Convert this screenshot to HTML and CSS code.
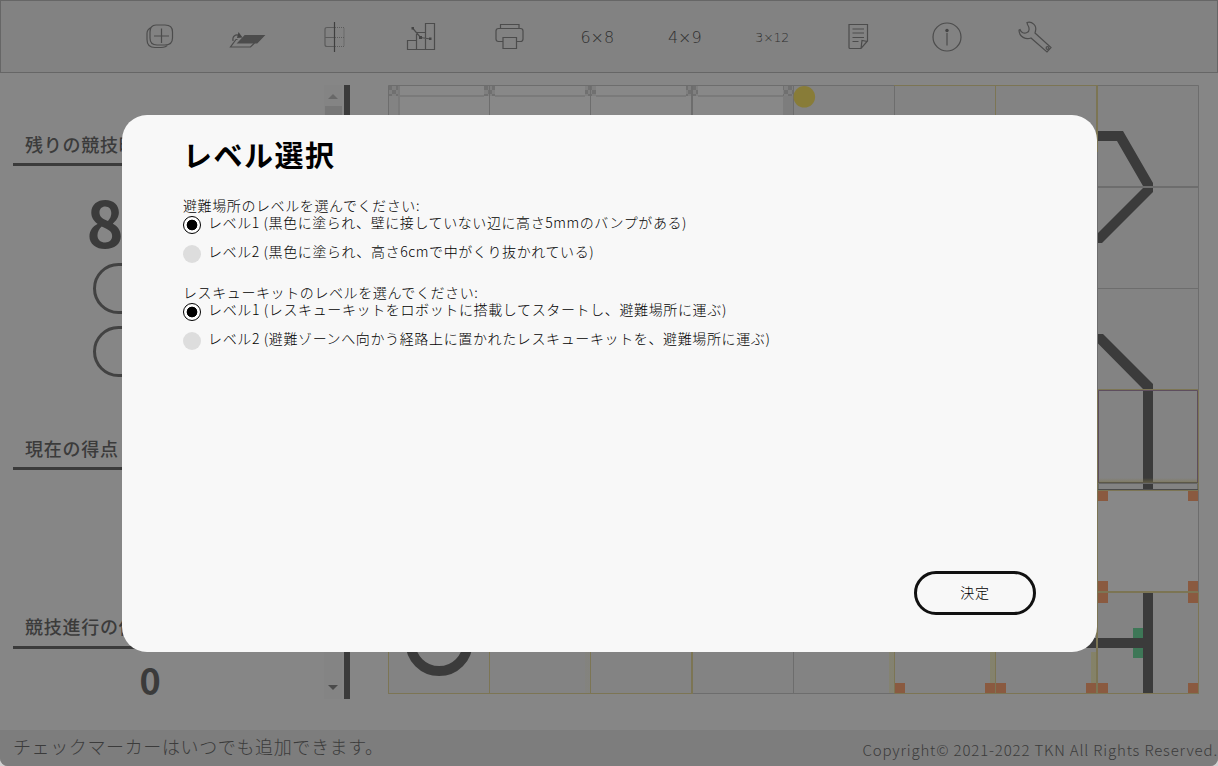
FILE: index.html
```
<!DOCTYPE html>
<html lang="ja">
<head>
<meta charset="utf-8">
<title>レベル選択</title>
<link rel="stylesheet" href="styles.css">
</head>
<body>
<div class="app">
  <header class="toolbar">
    <button class="tool"><svg width="34" height="34" viewBox="0 0 34 34"><path d="M13 4.500h9q7.500 0 7.500 7v6q0 7-7.500 7h-8q-7 0-7-7v-6q0-7 6-7zM8 7q-4 2-4 6v6q0 8 8 8h6q5 0 7-3M18.500 8v14.500M11 15.500h15" transform="translate(0 .5)"/></svg></button>
    <button class="tool"><svg width="40" height="34" viewBox="0 0 40 34"><path class="solid" d="M18 15.500h19L30 23H11z"/><path d="M10.500 19.500H9L3.500 27h20l4-4M6 21c-1-5 3-7 6-5.500"/><path class="fill" d="m11.500 12 4 5.500-5.500.5z"/></svg></button>
    <button class="tool"><svg width="34" height="34" viewBox="0 0 34 34"><path class="pale" d="M16 7.500H9q-2 0-2 2v15q0 2 2 2h7M7 17.500h9"/><path class="axis" d="M16.500 2v30"/><path class="dots" d="M17 7.500h9v19h-9M17 17.500h9"/></svg></button>
    <button class="tool"><svg width="34" height="34" viewBox="0 0 34 34"><path d="M2.500 29.500v-9h9v9zm9 0v-17h9v17zm9 0v-26h9v26zM7.500 8l8 9.500 10 1.500"/><path class="fill" d="M6.500 7h2.500v2.500H6.500zM14 16h3v3h-3zM24 17.500h2.500v2.500H24z"/></svg></button>
    <button class="tool"><svg width="34" height="34" viewBox="0 0 34 34"><path d="M7.500 8.500v-4H26v4M10 21.500H5.500q-2.500 0-2.500-2.500v-8q0-2.500 2.500-2.500h22q2.500 0 2.500 2.500v8q0 2.500-2.500 2.500h-4M10 17.500h13.500v11H10z"/></svg></button>
    <button class="tool size">6×8</button>
    <button class="tool size">4×9</button>
    <button class="tool size small">3×12</button>
    <button class="tool"><svg width="34" height="34" viewBox="0 0 34 34"><path d="M18 28.500H7q-1 0-1-1v-23h18.500V21zM18 28.500l1-8 5.500 1M9.500 9H21M9.500 13H21M9.500 17.500H21M9.500 21.500h6"/></svg></button>
    <button class="tool"><svg width="34" height="34" viewBox="0 0 34 34"><circle cx="17" cy="17" r="14"/><path d="M17 13v12.500"/><circle class="fill" cx="17" cy="10.500" r="1.700"/></svg></button>
    <button class="tool"><svg class="wrench" width="36" height="34" viewBox="0 0 36 34"><path d="M10 2.500c5-1.500 10 3 8.500 8.500l-.5 2 16 14.500-4 4.500-16-14c-5 2-12-1-12-8l1-.5c1 3 4 4.500 7 3 3-1 2.500-5 .5-8z"/><circle cx="30.500" cy="28" r="1.400"/></svg></button>
  </header>
  <main class="workspace">
    <aside class="score">
      <div class="score-body">
        <h2 class="time-title">残りの競技時間</h2>
        <div class="time">8:00</div>
        <button class="pill"></button>
        <button class="pill"></button>
        <h2 class="point-title">現在の得点</h2>
        <h2 class="stop-title">競技進行の停止</h2>
        <div class="stops">0</div>
      </div>
      <div class="scrollbar"><i class="up"></i><i class="thumb"></i><i class="down"></i></div>
    </aside>
    <svg class="field" width="811" height="609" viewBox="388 85 811 609">
      <defs>
        <pattern id="check" x="388" y="86" width="8" height="8" patternUnits="userSpaceOnUse"><path fill="#7f7f7f" d="M0 0h8v8H0z"/><path fill="#707070" d="M0 0h4v4H0zM4 4h4v4H4z"/></pattern>
        <linearGradient id="glow"><stop offset="0" stop-color="#86803f" stop-opacity="0"/><stop offset="1" stop-color="#86803f" stop-opacity=".4"/></linearGradient>
        <linearGradient id="rise" x2="0" y2="1"><stop offset="0" stop-color="#7d7448" stop-opacity="0"/><stop offset="1" stop-color="#7d7448" stop-opacity=".6"/></linearGradient>
      </defs>
      <path fill="#838383" d="M388 85h811v609H388z"/>
      <path fill="#888" d="M399 86h384v66H399zM1098 491h100v101h-100z"/>
      <path fill="#7d7d7d" d="M783 96h10v56h-10z"/>
      <path fill="url(#check)" d="M389 86h10v10h-10zM484 86h11v10h-11zM585 86h11v10h-11zM686 86h12v10h-12zM783 86h10v10h-10z"/>
      <path class="line" d="M388.500 85.500h810v608h-810zM489.500 85v609M590.500 85v609M793.500 85v609M894.500 85v609M388 288.500h811"/>
      <path class="line thick" d="M692 85v609M1097 85v609M388 187h811M388 390h811"/>
      <path class="line faint" d="M399 96h85M495 96h90M596 96h90M698 96h85M399 86v60"/>
      <circle cx="804.300" cy="96.800" r="10.800" fill="#887c38"/>
      <path fill="url(#glow)" d="M484 652h5v41h-5zM585 652h5v41h-5zM889 652h5v41h-5zM990 652h5v41h-5zM1091 652h5v41h-5z"/>
      <path class="ring" d="M410.500 642.500a28.600 28.600 0 1 0 57.200 0"/>
      <path class="track" d="M1098 131h25l30 52v3h-10l-26-45h-19zM1143 188h10v4l-51 51h-4v-10zM1098 334h5l50 50v5h-10l-45-45.500zM1143 391h10v98h-10zM1143 593h10v100h-10zM1080 638h63v10h-63z"/>
      <path fill="#3e7757" d="M1133 628h10v10h-10zM1133 648h10v10h-10z"/>
      <path fill="#8a5a40" d="M1098 491h10v10h-10zM1188 491h10v10h-10zM1098 581h10v10h-10zM1188 581h10v10h-10zM1098 593h10v10h-10zM1188 593h10v10h-10zM1098 683h10v10h-10zM1188 683h10v10h-10zM1086 683h10v10h-10zM985 683h10v10h-10zM996 683h10v10h-10zM895 683h10v10h-10z"/>
      <path class="olive" d="M388.500 600v93.500h304M489.500 600v94M590.500 600v94M894.500 600v93.500h304V592M894 85.500h203M995.500 85v609M1198.500 390v100M1097.500 592V390M1098 389.500h100M1098 490.500h100"/>
      <path class="olive wide" d="M692 600v94M1097 85v67M1097 592v102M1098 592h100"/>
      <path fill="url(#rise)" d="M1098 478h100v5h-100z"/>
      <path fill="none" stroke="#5e4e5e" d="M1098.500 483v-92.500h99V483"/>
      <path fill="none" stroke="#5c5848" d="M1098 482.500h100"/>
      <path fill="none" stroke="#666" d="M1098.500 489v-5.500h99v5.500"/>
      <path fill="none" stroke="#4b4b4b" d="M1098 489.500h100"/>
    </svg>
  </main>
  <footer class="status">
    <span class="hint">チェックマーカーはいつでも追加できます。</span>
    <span class="copyright">Copyright© 2021-2022 TKN All Rights Reserved.</span>
  </footer>
  <section class="dialog">
    <h1>レベル選択</h1>
    <fieldset>
      <legend>避難場所のレベルを選んでください:</legend>
      <label><i class="radio on"></i><span class="option narrow">レベル1 (黒色に塗られ、壁に接していない辺に高さ5mmのバンプがある)</span></label>
      <label><i class="radio"></i><span class="option">レベル2 (黒色に塗られ、高さ6cmで中がくり抜かれている)</span></label>
    </fieldset>
    <fieldset>
      <legend>レスキューキットのレベルを選んでください:</legend>
      <label><i class="radio on"></i><span class="option wide">レベル1 (レスキューキットをロボットに搭載してスタートし、避難場所に運ぶ)</span></label>
      <label><i class="radio"></i><span class="option wide">レベル2 (避難ゾーンへ向かう経路上に置かれたレスキューキットを、避難場所に運ぶ)</span></label>
    </fieldset>
    <button class="confirm">決定</button>
  </section>
</div>
</body>
</html>
```
FILE: styles.css
```
* { box-sizing: border-box; }
body { margin: 0; background: #d0d0d0; font-family: "Noto Sans CJK JP", sans-serif; color: #3b3b3b; }
button { font: inherit; color: inherit; background: none; border: 0; padding: 0; }
h1, h2 { margin: 0; }

.app { position: relative; display: flex; flex-direction: column; width: 1218px; height: 766px; overflow: hidden; background: #868686; border-radius: 0 0 8px 8px; }

.toolbar { display: flex; flex: 0 0 73px; padding-left: 115px; background: #828282; border: 1px solid #666; }
.tool { display: flex; align-items: center; justify-content: center; flex: 0 0 87.500px; }
.tool svg { fill: none; stroke: #4c4c4c; stroke-width: 1.200; }
.tool .solid { fill: #4c4c4c; }
.tool .fill { fill: #454545; stroke: none; }
.tool .pale { stroke: #5c5c5c; }
.tool .axis { stroke: #3f3f3f; }
.tool .dots { stroke: #5c5c5c; stroke-dasharray: 1 1; }
.size { padding-top: 2px; font-family: "DejaVu Sans", sans-serif; font-size: 16px; font-weight: 300; letter-spacing: -.1px; color: #303030; }
.size.small { padding-top: 1px; font-size: 12.500px; letter-spacing: -.1px; }

.workspace { display: flex; flex: 1; min-height: 0; align-items: flex-start; padding: 12px 19px 0 13px; justify-content: space-between; }
.score { display: flex; width: 337px; height: 614px; border-right: 6px solid #3b3b3b; justify-content: space-between; }
.score-body { display: flex; flex-direction: column; align-items: center; width: 274px; }
.score-body > * { flex-shrink: 0; }
.score h2 { width: 100%; height: 40px; padding-left: 12px; border-bottom: 3px solid #3b3b3b; font-size: 18px; line-height: 34px; font-weight: 500; letter-spacing: .75px; }
.score .time-title, .score .point-title { line-height: 36px; }
.score .time-title { margin-top: 41px; }
.time { height: 97px; line-height: 110px; font-size: 63px; font-weight: 700; letter-spacing: -1.200px; }
.pill { height: 51px; width: 114px; margin-bottom: 12px; border: 3px solid #424242; border-radius: 26px; }
.score .point-title { margin-top: 41px; }
.score .stop-title { margin-top: 139px; }
.stops { font-size: 36px; line-height: 60px; font-weight: 700; }
.scrollbar { display: flex; flex-direction: column; align-items: center; width: 18px; margin-right: 2px; background: #848484; }
.up, .down { border: 5px solid transparent; }
.up { border-bottom-color: #686868; border-top: 0; margin-top: 9px; }
.thumb { width: 17px; height: 500px; margin-top: 7px; background: #777; }
.down { margin: auto 0 9px; border-top-color: #4b4b4b; border-bottom: 0; }

.field { display: block; fill: none; }
.line { stroke: #6d6d6d; }
.line.thick { stroke-width: 2; }
.line.faint { stroke: #7a7a7a; stroke-width: 2; }
.ring { stroke: #3b3b3b; stroke-width: 10; }
.track { fill: #3b3b3b; }
.olive { stroke: #7c7554; }
.olive.wide { stroke-width: 2; }

.status { display: flex; justify-content: space-between; height: 36px; flex: none; padding-left: 13px; background: #7d7d7d; white-space: nowrap; }
.hint { font-size: 18px; line-height: 33px; font-weight: 300; letter-spacing: .62px; }
.copyright { font-size: 15px; line-height: 39px; font-weight: 300; letter-spacing: .84px; }

.dialog { position: absolute; left: 122px; top: 115px; width: 975px; height: 537px; padding: 19px 61px 37px; display: flex; flex-direction: column; background: #f8f8f8; color: #000; border-radius: 25px; }
.dialog h1 { height: 63px; font-size: 29px; line-height: 40px; font-weight: 700; letter-spacing: 1.500px; }
fieldset { margin: 0 0 11px; padding: 0; border: 0; font-size: 14px; font-weight: 300; letter-spacing: .6px; white-space: nowrap; }
legend { padding: 0; height: 18px; line-height: 16px; }
label { display: flex; gap: 7px; height: 29px; line-height: 15px; }
.option.narrow { letter-spacing: .58px; }
.option.wide { letter-spacing: .63px; }
.radio { width: 18px; height: 18px; margin-top: 1px; border-radius: 50%; background: #ddd; }
.radio.on { border: 1px solid #000; background: radial-gradient(circle, #000 5px, #fff 5.700px); }
.confirm { width: 122px; height: 44px; margin: auto 0 0 auto; padding-bottom: 2px; border: 3px solid #111; border-radius: 22px; font-size: 14px; font-weight: 300; letter-spacing: .8px; }
```
